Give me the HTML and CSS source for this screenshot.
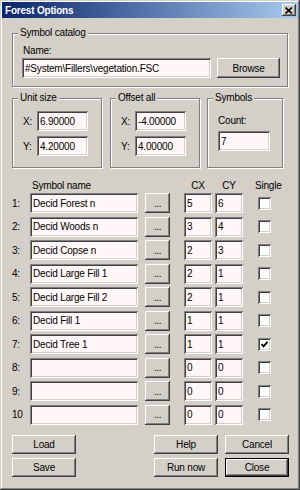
FILE: index.html
```html
<!DOCTYPE html>
<html>
<head>
<meta charset="utf-8">
<link rel="stylesheet" href="styles.css">
</head>
<body>
<div class="window">
  <div class="titlebar">
    <span class="title">Forest Options</span>
    <span class="close"><svg width="8" height="7" viewBox="0 0 8 7"><path d="M0.5 0.5 L7 6.5 M7 0.5 L0.5 6.5" stroke="#000" stroke-width="1.6" fill="none"/></svg></span>
  </div>
  <div class="content">
    <div class="group catalog">
      <span class="legend">Symbol catalog</span>
      <div class="lbl">Name:</div>
      <div class="hrow">
        <input class="field path" value="#System\Fillers\vegetation.FSC">
        <button class="btn browse">Browse</button>
      </div>
    </div>

    <div class="groups">
      <div class="group unit">
        <span class="legend">Unit size</span>
        <div class="xy"><span class="axis">X:</span><input class="field num" value="6.90000"></div>
        <div class="xy"><span class="axis">Y:</span><input class="field num" value="4.20000"></div>
      </div>
      <div class="group offset">
        <span class="legend">Offset all</span>
        <div class="xy"><span class="axis">X:</span><input class="field num" value="-4.00000"></div>
        <div class="xy"><span class="axis">Y:</span><input class="field num" value="4.00000"></div>
      </div>
      <div class="group symbols">
        <span class="legend">Symbols</span>
        <div class="count-lbl">Count:</div>
        <input class="field count" value="7">
      </div>
    </div>

    <div class="cols head">
      <span></span>
      <span class="h-name">Symbol name</span>
      <span></span>
      <span class="h-c">CX</span>
      <span class="h-c">CY</span>
      <span class="h-single">Single</span>
    </div>

    <div class="cols rows">
      <span class="num-lbl">1:</span><input class="field name" value="Decid Forest n"><button class="btn dots">...</button><input class="field c" value="5"><input class="field c" value="6"><span class="chk"></span>
      <span class="num-lbl">2:</span><input class="field name" value="Decid Woods n"><button class="btn dots">...</button><input class="field c" value="3"><input class="field c" value="4"><span class="chk"></span>
      <span class="num-lbl">3:</span><input class="field name" value="Decid Copse n"><button class="btn dots">...</button><input class="field c" value="2"><input class="field c" value="3"><span class="chk"></span>
      <span class="num-lbl">4:</span><input class="field name" value="Decid Large Fill 1"><button class="btn dots">...</button><input class="field c" value="2"><input class="field c" value="1"><span class="chk"></span>
      <span class="num-lbl">5:</span><input class="field name" value="Decid Large Fill 2"><button class="btn dots">...</button><input class="field c" value="2"><input class="field c" value="1"><span class="chk"></span>
      <span class="num-lbl">6:</span><input class="field name" value="Decid Fill 1"><button class="btn dots">...</button><input class="field c" value="1"><input class="field c" value="1"><span class="chk"></span>
      <span class="num-lbl">7:</span><input class="field name" value="Decid Tree 1"><button class="btn dots">...</button><input class="field c" value="1"><input class="field c" value="1"><span class="chk"><svg width="13" height="13" viewBox="0 0 13 13"><path d="M3.5 6 L5.5 8.3 L9.5 3.8" stroke="#000" stroke-width="1.8" fill="none"/></svg></span>
      <span class="num-lbl">8:</span><input class="field name" value=""><button class="btn dots">...</button><input class="field c" value="0"><input class="field c" value="0"><span class="chk"></span>
      <span class="num-lbl">9:</span><input class="field name" value=""><button class="btn dots">...</button><input class="field c" value="0"><input class="field c" value="0"><span class="chk"></span>
      <span class="num-lbl">10</span><input class="field name" value=""><button class="btn dots">...</button><input class="field c" value="0"><input class="field c" value="0"><span class="chk"></span>
    </div>

    <div class="buttons">
      <div class="btnrow">
        <button class="btn b">Load</button>
        <button class="btn b">Help</button>
        <button class="btn b">Cancel</button>
      </div>
      <div class="btnrow">
        <button class="btn b">Save</button>
        <button class="btn b">Run now</button>
        <button class="btn b default">Close</button>
      </div>
    </div>
  </div>
</div>
</body>
</html>
```
FILE: styles.css
```css
* { box-sizing: border-box; }
html, body { margin: 0; padding: 0; }
body {
  width: 300px;
  height: 490px;
  background: #d4d0c8;
  font: 10px/13px "Liberation Sans", Arial, sans-serif;
  letter-spacing: -0.2px;
  color: #000;
}
.window {
  width: 300px;
  height: 490px;
  padding: 2px;
  background: #d4d0c8;
  box-shadow: inset -1px -1px #404040, inset 1px 1px #d4d0c8, inset -2px -2px #808080, inset 2px 2px #fff;
  display: flex;
  flex-direction: column;
}
.titlebar {
  height: 16px;
  background: linear-gradient(to right, #0a246a, #a6caf0);
  display: flex;
  align-items: center;
  justify-content: space-between;
  padding: 0 2px 0 3px;
}
.title {
  color: #fff;
  font-weight: bold;
  font-size: 10px;
}
.close {
  width: 14px;
  height: 12px;
  background: #d4d0c8;
  box-shadow: inset -1px -1px #404040, inset 1px 1px #fff, inset -2px -2px #808080;
  display: flex;
  align-items: center;
  justify-content: center;
}
.content {
  flex: 1;
  padding: 15px 0 0 10px;
}
.group {
  border: 1px solid #808080;
  box-shadow: inset 1px 1px #fff, 1px 1px #fff;
  position: relative;
}
.legend {
  position: absolute;
  top: -8px;
  left: 5px;
  padding: 0 2px;
  background: #d4d0c8;
  white-space: nowrap;
}
.field {
  border: 0;
  outline: none;
  margin: 0;
  font: inherit;
  letter-spacing: inherit;
  color: #000;
  background: #fff7f7;
  padding: 0 0 0 3px;
  box-shadow: inset 1px 1px #808080, inset -1px -1px #fff, inset 2px 2px #404040, inset -2px -2px #d4d0c8;
}
.btn {
  border: 0;
  margin: 0;
  padding: 0;
  font: inherit;
  letter-spacing: inherit;
  color: #000;
  background: #d4d0c8;
  box-shadow: inset -1px -1px #404040, inset 1px 1px #fff, inset -2px -2px #808080, inset 2px 2px #d4d0c8;
}
.btn.default {
  box-shadow: inset 0 0 0 1px #000, inset -2px -2px #404040, inset 2px 2px #fff, inset -3px -3px #808080;
}
.catalog {
  width: 276px;
  height: 54px;
  padding: 10px 0 0 9px;
}
.catalog .lbl {
  height: 13px;
  margin: 0 0 1px 1px;
}
.hrow {
  display: flex;
  gap: 6px;
}
.path { width: 189px; height: 20px; }
.browse { width: 63px; height: 20px; }

.groups {
  display: flex;
  margin-top: 11px;
  height: 70px;
}
.unit, .offset {
  width: 90px;
  padding: 12px 0 0 10px;
}
.offset { margin-left: 8px; }
.symbols {
  width: 76px;
  margin-left: 7px;
  padding: 15px 0 0 10px;
}
.xy {
  display: flex;
  align-items: center;
  height: 20px;
}
.xy + .xy { margin-top: 5px; }
.axis { width: 14px; }
.num { width: 51px; height: 20px; }
.count-lbl { height: 13px; margin-bottom: 4px; }
.count { width: 52px; height: 20px; }

.cols {
  display: grid;
  grid-template-columns: 18px 115px 39px 31px 43px 13px;
}
.head {
  margin-top: 11px;
  height: 13px;
  margin-bottom: 1px;
}
.h-name { padding-left: 2px; }
.h-c { width: 28px; text-align: center; }
.h-single { margin-left: -3px; white-space: nowrap; }
.rows {
  grid-auto-rows: 20px;
  row-gap: 3.5px;
  align-items: center;
}
.name { width: 108px; height: 20px; }
.dots { width: 25px; height: 20px; }
.c { width: 28px; height: 20px; }
.chk {
  width: 13px;
  height: 13px;
  background: #fff;
  box-shadow: inset 1px 1px #808080, inset -1px -1px #fff, inset 2px 2px #404040, inset -2px -2px #d4d0c8;
  display: block;
}
.chk svg { display: block; }

.buttons { margin-top: 10.5px; }
.btnrow {
  display: flex;
  gap: 7px;
  padding-right: 9px;
}
.btnrow + .btnrow { margin-top: 4px; }
.b { width: 64px; height: 19px; }
.b:first-child { margin-right: auto; }
```
